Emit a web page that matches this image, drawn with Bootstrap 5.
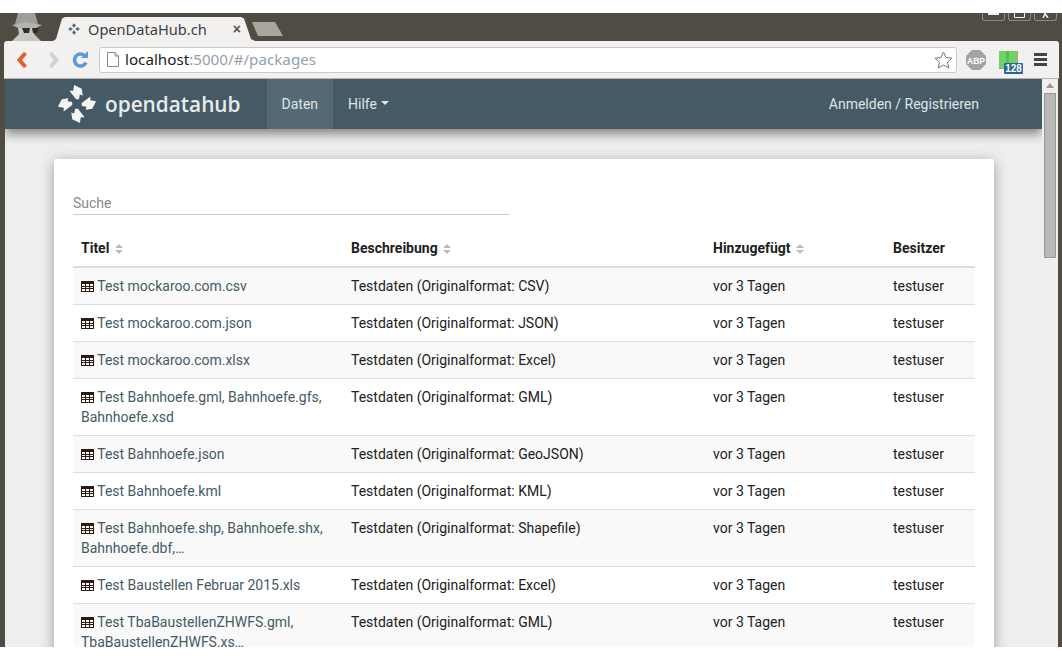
<!DOCTYPE html>
<html lang="en">
<head>
    <meta charset="UTF-8">
    <meta name="viewport" content="width=device-width, initial-scale=1.0">
    <title>OpenDataHub.ch</title>
    <link href="https://cdn.jsdelivr.net/npm/bootstrap@5.3.0/dist/css/bootstrap.min.css" rel="stylesheet">
    <style>
        html, body {
            height: 660px;
            overflow: hidden;
            background: #fff;
        }
        .win-frame {
            margin-top: 13px;
            height: 634px;
            background: #504c44;
            padding: 0 3px 0 4px;
            overflow: hidden;
        }
        .tab-strip {
            height: 28px;
            padding-left: 6px;
        }
        .spy-icon {
            width: 32px;
            height: 28px;
            margin-right: 11px;
        }
        .cur-tab {
            width: 202px;
            height: 24px;
            margin-top: 4px;
            background: #f2f1f0;
            clip-path: polygon(0 100%, 3px 92%, 9px 6%, 12px 0, 188px 0, 191px 6%, 198px 92%, 202px 100%);
            padding: 0 14px 0 15px;
            font: 14.6px/24px "Noto Sans", sans-serif;
            color: #3c4043;
        }
        .tab-close {
            font: 700 14px/24px "Liberation Sans", sans-serif;
            color: #555;
        }
        .new-tab {
            width: 31px;
            height: 14px;
            margin: 9px 0 0 -3px;
            background: #a8a69f;
            clip-path: polygon(0 0, 23px 0, 31px 100%, 6px 100%);
        }
        .win-btns {
            gap: 3px;
            padding-right: 2px;
        }
        .win-btn {
            width: 23px;
            height: 8px;
            border: 1px solid #8d8a83;
            border-top: 0;
            border-radius: 0 0 3px 3px;
        }
        .tool-bar {
            height: 38px;
            background: #f2f1f0;
            border-bottom: 1px solid #b4b4b2;
            border-radius: 3px 3px 0 0;
            padding: 0 11px 0 8px;
        }
        .omni-box {
            width: 858px;
            height: 26px;
            margin: 0 9px 0 10px;
            background: #fff;
            border: 1px solid #c8c8c6;
            border-radius: 3px;
            padding: 0 3px 0 7px;
            font: 15.2px/24px "Noto Sans", sans-serif;
            color: #94a0aa;
        }
        .omni-text {
            margin-bottom: 2px;
        }
        .omni-host {
            color: #222;
        }
        .page-glyph {
            margin-right: 6px;
        }
        .ext-wrap {
            width: 24px;
            height: 26px;
            margin-left: 13px;
        }
        .num-badge {
            right: 0;
            bottom: -1px;
            width: 19px;
            height: 11px;
            background: #2c6496;
            border-radius: 1px;
            color: #fff;
            text-align: center;
            font: 700 10px/11px "Liberation Sans", sans-serif;
        }
        .burger {
            width: 13px;
            height: 13px;
            border-top: 3px solid #444;
            border-bottom: 3px solid #444;
            margin-left: 11px;
        }
        .burger div {
            height: 3px;
            margin-top: 2px;
            background: #444;
        }
        .view-area {
            height: 568px;
            padding-left: 1px;
        }
        .page-area {
            width: 1037px;
            background: #eee;
            overflow: hidden;
            font-family: Roboto, sans-serif;
            font-size: 14px;
            line-height: 20px;
            color: #212121;
        }
        .odh-nav {
            height: 50px;
            background: #455a64;
            box-shadow: 0 5px 10px rgba(0, 0, 0, .45);
            padding: 0 48px 0 52px !important;
            position: relative;
            z-index: 2;
        }
        .odh-brand {
            padding: 0;
            margin-right: 26px;
            font: 600 20.8px/50px "Open Sans", sans-serif;
            color: #e8ebec !important;
        }
        .odh-nav .nav-link {
            height: 50px;
            padding: 15px !important;
            color: #dfe4e6 !important;
        }
        .odh-nav .nav-link.active {
            background: #546a75;
        }
        .sheet {
            margin: 30px 48px 0 49px;
            padding: 31px 19px 0;
            border: 0;
            border-radius: 2px;
            box-shadow: 0 3px 14px rgba(0, 0, 0, .35);
        }
        .find-input {
            width: 436px;
            height: 25px;
            padding: 2px 0 0;
            border: 0;
            border-bottom: 1px solid #ccc;
            border-radius: 0;
            background: transparent;
            font-size: 14px;
            margin-bottom: 15px;
        }
        .find-input::placeholder {
            color: #8a8a8a;
        }
        .data-tbl {
            table-layout: fixed;
            margin: 0;
            color: #212121;
            --bs-table-striped-bg: #f9f9f9;
            --bs-table-striped-color: #212121;
            --bs-table-color: #212121;
            border-color: #ddd;
        }
        .data-tbl th, .data-tbl td {
            padding: 8px;
            vertical-align: top;
            border-bottom-width: 1px;
            border-color: #ddd;
        }
        .data-tbl thead th {
            border-bottom: 2px solid #ddd;
        }
        .data-tbl > tbody {
            border-top: 0 !important;
        }
        .data-tbl a {
            color: #455a64;
            text-decoration: none;
        }
        .sort-mark {
            width: 8px;
            height: 10px;
            margin-left: 2px;
            fill: #bbb;
        }
        .tbl-icon {
            width: 13px;
            height: 11px;
            vertical-align: -1px;
        }
        .bar-track {
            width: 16px;
            background: #f0efee;
            padding: 0 2px;
        }
        .bar-arrow {
            height: 14px;
            padding-top: 4px;
        }
        .bar-thumb {
            height: 165px;
            background: #b8b8b8;
            border: 1px solid #999;
        }
    </style>
</head>
<body>
    <svg width="0" height="0" class="d-block">
        <defs>
            <g id="wheel-arm">
                <path d="M-1-5-8-14-4-14-3-20 5-16 6-9 3-10 2-5Z"/>
            </g>
            <g id="wheel">
                <use href="#wheel-arm"/>
                <use href="#wheel-arm" transform="rotate(90)"/>
                <use href="#wheel-arm" transform="rotate(180)"/>
                <use href="#wheel-arm" transform="rotate(270)"/>
            </g>
            <symbol id="sort-sym" viewBox="0 0 8 10">
                <path d="M4 0 8 4H0ZM0 6H8L4 10Z"/>
            </symbol>
            <symbol id="tbl-sym" viewBox="0 0 13 11">
                <path fill="#2a1a10" d="M0 0H13V11H0ZM1 3V5H4V3ZM5 3V5H8V3ZM9 3V5H12V3ZM1 6V7H4V6ZM5 6V7H8V6ZM9 6V7H12V6ZM1 8V10H4V8ZM5 8V10H8V8ZM9 8V10H12V8Z"/>
            </symbol>
        </defs>
    </svg>

    <div class="win-frame">
        <div class="tab-strip d-flex">
            <svg class="spy-icon" viewBox="0 0 32 28">
                <path fill="#a09e98" d="M8 0H25L28 11H5Z"/>
                <path fill="#b5b3ad" d="M2 12 16 9 32 12 26 15H8Z"/>
                <path fill="#c8c6c0" d="M8 15H26L24 21 31 28H2L9 21Z"/>
                <path fill="#2e2c28" d="M12 15H20L19 20H14ZM22 15H29L27 20H23Z"/>
            </svg>
            <div class="cur-tab d-flex align-items-center">
                <svg width="12" height="12" viewBox="-21 -21 42 42" class="me-2 flex-shrink-0" fill="#4f6d85"><use href="#wheel"/></svg>
                <span class="flex-grow-1">OpenDataHub.ch</span>
                <span class="tab-close">×</span>
            </div>
            <div class="new-tab"></div>
            <div class="win-btns ms-auto d-flex">
                <div class="win-btn d-flex justify-content-center">
                    <svg width="11" height="2" viewBox="0 0 11 2"><rect width="11" height="2" fill="#f2f1f0"/></svg>
                </div>
                <div class="win-btn d-flex justify-content-center">
                    <svg width="11" height="5" viewBox="0 0 11 5"><path d="M.5 0V4.500H10.500V0" fill="none" stroke="#f2f1f0"/></svg>
                </div>
                <div class="win-btn d-flex justify-content-center">
                    <svg width="9" height="5" viewBox="0 0 9 5"><path d="M2 5 5-1M7 5 3-1" fill="none" stroke="#f2f1f0" stroke-width="1.500"/></svg>
                </div>
            </div>
        </div>

        <div class="tool-bar d-flex align-items-center">
            <svg width="14" height="18" viewBox="0 0 14 18" class="ms-1 me-3 flex-shrink-0">
                <path d="M9.500 2 3.500 9 9.500 16" fill="none" stroke="#e0622a" stroke-width="4"/>
            </svg>
            <svg width="14" height="18" viewBox="0 0 14 18" class="me-2 flex-shrink-0">
                <path d="M4.500 2 10.500 9 4.500 16" fill="none" stroke="#d2d2d0" stroke-width="4"/>
            </svg>
            <svg width="17" height="17" viewBox="0 0 17 17" class="ms-1 flex-shrink-0">
                <path d="M14 11.500A6 6 0 1 1 12.500 4.500" fill="none" stroke="#5c9bd6" stroke-width="3.500"/>
                <path fill="#5c9bd6" d="M9 7H16V0Z"/>
            </svg>
            <div class="omni-box d-flex align-items-center flex-shrink-0">
                <svg width="12" height="15" viewBox="0 0 12 15" class="page-glyph flex-shrink-0">
                    <path d="M.5.5H8L11.500 4V14.500H.5ZM8 .5V4H11.500" fill="#fff" stroke="#888"/>
                </svg>
                <span class="omni-text flex-grow-1"><span class="omni-host">localhost</span>:5000/#/packages</span>
                <svg width="19" height="18" viewBox="0 0 19 18">
                    <path d="M9.500 1 12 6.500 18 7.200 13.500 11.300 14.800 17 9.500 14 4.200 17 5.500 11.300 1 7.200 7 6.500Z" fill="#fff" stroke="#777"/>
                </svg>
            </div>
            <svg width="20" height="20" viewBox="0 0 20 20" class="flex-shrink-0">
                <path fill="#a3a3a3" d="M6 0H14L20 6V14L14 20H6L0 14V6Z"/>
                <text x="10" y="13.500" text-anchor="middle" fill="#fff" font-family="Liberation Sans" font-weight="700" font-size="8.500">ABP</text>
            </svg>
            <div class="ext-wrap position-relative flex-shrink-0">
                <svg width="19" height="18" viewBox="0 0 19 18" class="d-block mt-1">
                    <rect width="19" height="18" fill="#6bd566"/>
                    <path d="M7 0H10V18H7Z" fill="#58b957"/>
                    <path d="M0 17.500H18.500V0" fill="none" stroke="#c98a80"/>
                </svg>
                <div class="num-badge position-absolute">128</div>
            </div>
            <div class="burger flex-shrink-0"><div></div></div>
        </div>

        <div class="view-area d-flex">
            <div class="page-area">
                <nav class="navbar navbar-expand odh-nav">
                    <a class="navbar-brand odh-brand d-flex align-items-center gap-2" href="#">
                        <svg width="40" height="40" viewBox="-21 -21 42 42" fill="#f4f6f6"><use href="#wheel"/></svg>
                        opendatahub
                    </a>
                    <ul class="navbar-nav">
                        <li class="nav-item"><a class="nav-link active" href="#">Daten</a></li>
                        <li class="nav-item"><a class="nav-link dropdown-toggle" href="#">Hilfe</a></li>
                    </ul>
                    <ul class="navbar-nav ms-auto">
                        <li class="nav-item"><a class="nav-link" href="#">Anmelden / Registrieren</a></li>
                    </ul>
                </nav>

                <div class="card sheet">
                    <input class="form-control find-input" type="text" placeholder="Suche">
                    <table class="table table-striped data-tbl">
                        <colgroup>
                            <col width="270"><col width="362"><col width="180"><col width="90">
                        </colgroup>
                        <thead>
                            <tr>
                                <th>Titel <svg class="sort-mark"><use href="#sort-sym"/></svg></th>
                                <th>Beschreibung <svg class="sort-mark"><use href="#sort-sym"/></svg></th>
                                <th>Hinzugefügt <svg class="sort-mark"><use href="#sort-sym"/></svg></th>
                                <th>Besitzer</th>
                            </tr>
                        </thead>
                        <tbody>
                            <tr>
                                <td><a href="#"><svg class="tbl-icon"><use href="#tbl-sym"/></svg> Test mockaroo.com.csv</a></td>
                                <td>Testdaten (Originalformat: CSV)</td>
                                <td>vor 3 Tagen</td>
                                <td>testuser</td>
                            </tr>
                            <tr>
                                <td><a href="#"><svg class="tbl-icon"><use href="#tbl-sym"/></svg> Test mockaroo.com.json</a></td>
                                <td>Testdaten (Originalformat: JSON)</td>
                                <td>vor 3 Tagen</td>
                                <td>testuser</td>
                            </tr>
                            <tr>
                                <td><a href="#"><svg class="tbl-icon"><use href="#tbl-sym"/></svg> Test mockaroo.com.xlsx</a></td>
                                <td>Testdaten (Originalformat: Excel)</td>
                                <td>vor 3 Tagen</td>
                                <td>testuser</td>
                            </tr>
                            <tr>
                                <td><a href="#"><svg class="tbl-icon"><use href="#tbl-sym"/></svg> Test Bahnhoefe.gml, Bahnhoefe.gfs, Bahnhoefe.xsd</a></td>
                                <td>Testdaten (Originalformat: GML)</td>
                                <td>vor 3 Tagen</td>
                                <td>testuser</td>
                            </tr>
                            <tr>
                                <td><a href="#"><svg class="tbl-icon"><use href="#tbl-sym"/></svg> Test Bahnhoefe.json</a></td>
                                <td>Testdaten (Originalformat: GeoJSON)</td>
                                <td>vor 3 Tagen</td>
                                <td>testuser</td>
                            </tr>
                            <tr>
                                <td><a href="#"><svg class="tbl-icon"><use href="#tbl-sym"/></svg> Test Bahnhoefe.kml</a></td>
                                <td>Testdaten (Originalformat: KML)</td>
                                <td>vor 3 Tagen</td>
                                <td>testuser</td>
                            </tr>
                            <tr>
                                <td><a href="#"><svg class="tbl-icon"><use href="#tbl-sym"/></svg> Test Bahnhoefe.shp, Bahnhoefe.shx, Bahnhoefe.dbf,…</a></td>
                                <td>Testdaten (Originalformat: Shapefile)</td>
                                <td>vor 3 Tagen</td>
                                <td>testuser</td>
                            </tr>
                            <tr>
                                <td><a href="#"><svg class="tbl-icon"><use href="#tbl-sym"/></svg> Test Baustellen Februar 2015.xls</a></td>
                                <td>Testdaten (Originalformat: Excel)</td>
                                <td>vor 3 Tagen</td>
                                <td>testuser</td>
                            </tr>
                            <tr>
                                <td><a href="#"><svg class="tbl-icon"><use href="#tbl-sym"/></svg> Test TbaBaustellenZHWFS.gml, TbaBaustellenZHWFS.xs…</a></td>
                                <td>Testdaten (Originalformat: GML)</td>
                                <td>vor 3 Tagen</td>
                                <td>testuser</td>
                            </tr>
                        </tbody>
                    </table>
                </div>
            </div>
            <div class="bar-track">
                <div class="bar-arrow d-flex justify-content-center">
                    <svg width="8" height="5" viewBox="0 0 8 5" fill="#999"><path d="M4 0 8 5H0Z"/></svg>
                </div>
                <div class="bar-thumb"></div>
            </div>
        </div>
    </div>

    <script src="https://cdn.jsdelivr.net/npm/bootstrap@5.3.0/dist/js/bootstrap.bundle.min.js"></script>
</body>
</html>
